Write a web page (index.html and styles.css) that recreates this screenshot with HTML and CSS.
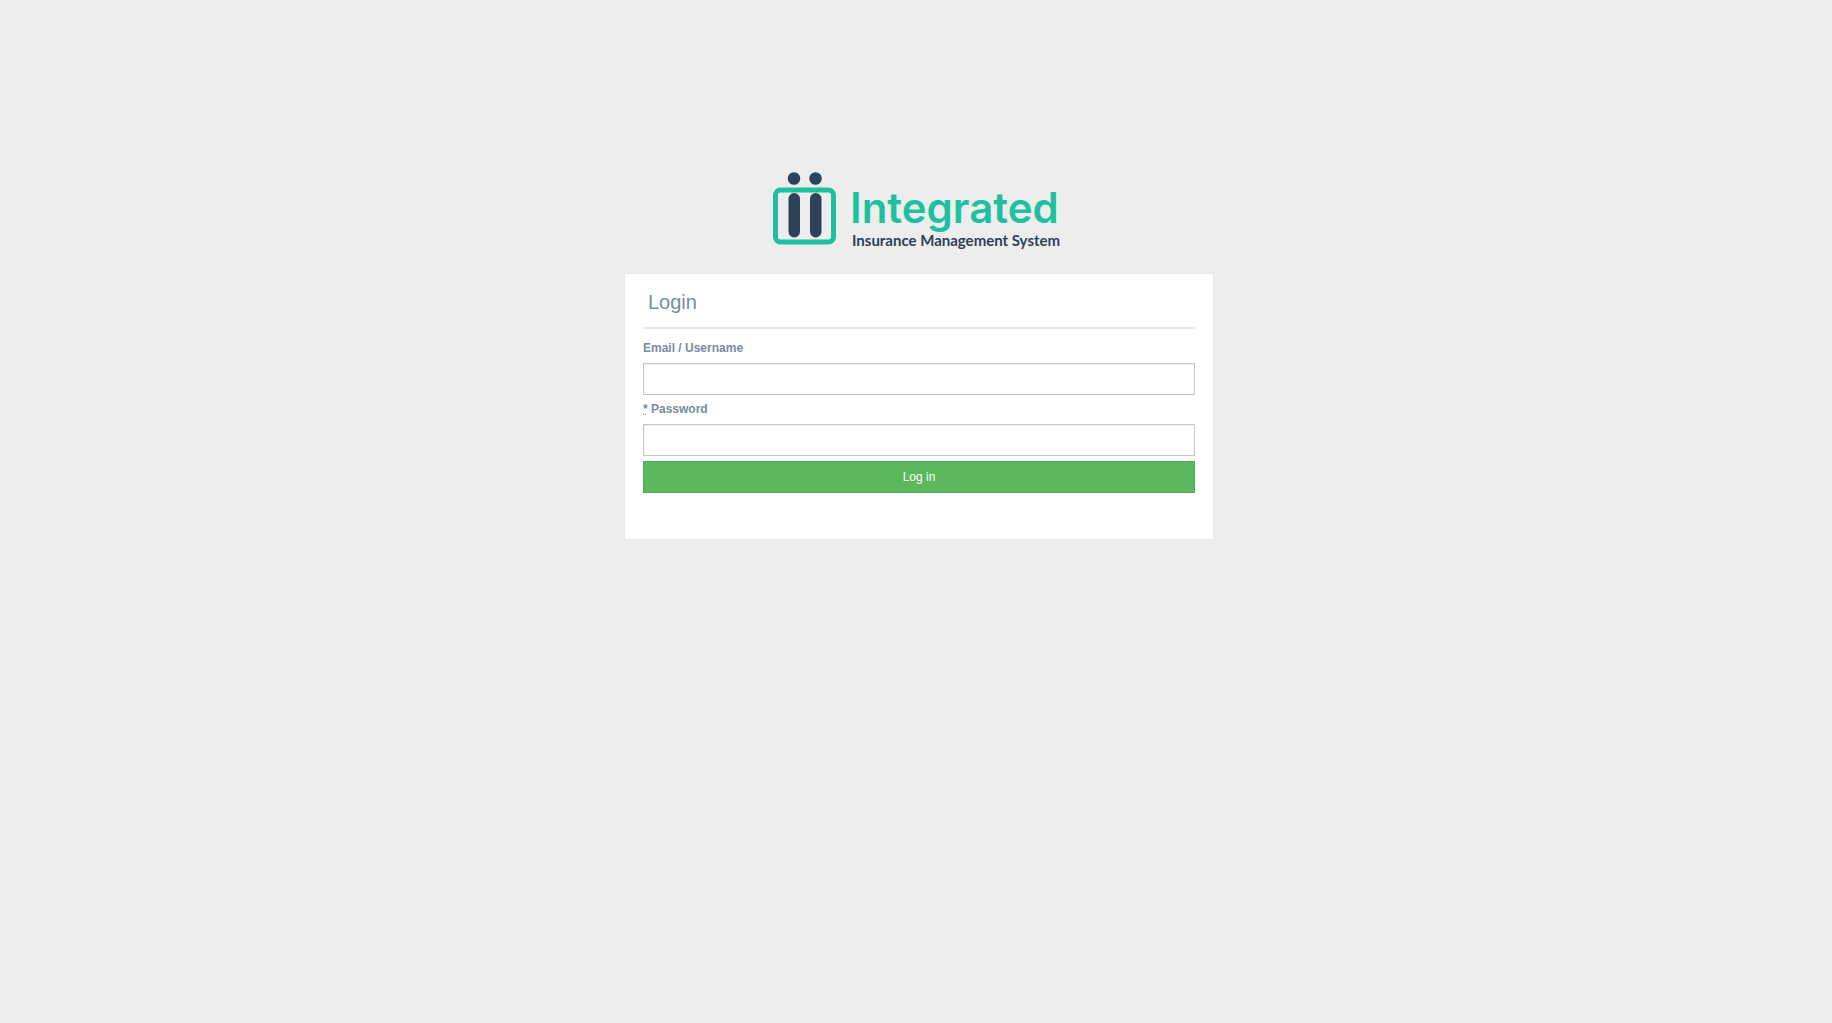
FILE: index.html
```html
<!DOCTYPE html>
<html lang="en">
<head>
<meta charset="utf-8">
<meta name="viewport" content="width=device-width, initial-scale=1">
<title>Login</title>
<link rel="stylesheet" href="styles.css">
</head>
<body>
<main class="page">
  <svg class="logo" viewBox="0 0 288 80" role="img" aria-label="Integrated Insurance Management System">
    <rect class="logo-frame" x="3.5" y="18" width="58" height="52" rx="5"/>
    <circle class="logo-ink" cx="22" cy="6.5" r="6.3"/>
    <circle class="logo-ink" cx="43.5" cy="6.5" r="6.3"/>
    <rect class="logo-ink" x="16.5" y="21" width="11.5" height="44.5" rx="5.7"/>
    <rect class="logo-ink" x="38" y="21" width="11.5" height="44.5" rx="5.7"/>
    <text class="logo-name" x="78" y="51">Integrated</text>
    <text class="logo-tagline" x="80" y="74">Insurance Management System</text>
  </svg>
  <section class="card">
    <h1 class="card-title">Login</h1>
    <form class="form">
      <label class="label" for="username">Email / Username</label>
      <input class="input" id="username" type="text">
      <label class="label" for="password"><abbr title="required">*</abbr> Password</label>
      <input class="input" id="password" type="password">
      <button class="button" type="submit">Log in</button>
    </form>
  </section>
</main>
</body>
</html>
```
FILE: styles.css
```css
* {
  box-sizing: border-box;
}

body {
  margin: 0;
  min-height: 100vh;
  background: #ededed;
  color: #778ba0;
  font: 12px/18px "Liberation Sans", Arial, sans-serif;
}

.page {
  display: flex;
  flex-direction: column;
  align-items: center;
  padding: 172px 16px 40px;
}

.logo {
  width: 288px;
  height: 80px;
  overflow: visible;
}

.logo-frame {
  fill: none;
  stroke: #1fc0a0;
  stroke-width: 5;
}

.logo-ink {
  fill: #2e4259;
}

.logo-name {
  fill: #1fc0a0;
  font: 600 42px Inter, sans-serif;
}

.logo-tagline {
  fill: #2e4259;
  font: 700 15px Lato, sans-serif;
}

.card {
  width: 100%;
  max-width: 590px;
  margin: 21px 0 0 6px;
  padding: 0 18px 46px;
  background: #fff;
  border: 1px solid #e7e8e8;
}

.card-title {
  margin: 0 0 10px;
  padding: 15px 5px 12px;
  border-bottom: 2px solid #e6e8e9;
  font-size: 20px;
  font-weight: 400;
  line-height: 26px;
}

.form {
  display: flex;
  flex-direction: column;
}

.label {
  margin-bottom: 6px;
  font-weight: 700;
}

.input {
  width: 100%;
  height: 32px;
  margin: 0 0 5px;
  padding: 6px 12px;
  border: 1px solid #c6c6c8;
  border-radius: 0;
  background: #fff;
  box-shadow: inset 0 1px 1px rgba(0, 0, 0, 0.08);
  color: #555;
  font: inherit;
}

.button {
  height: 32px;
  padding: 0 12px;
  border: 1px solid #55a860;
  border-radius: 0;
  background: #5cb85c;
  color: #fff;
  font: inherit;
  cursor: pointer;
}
```
